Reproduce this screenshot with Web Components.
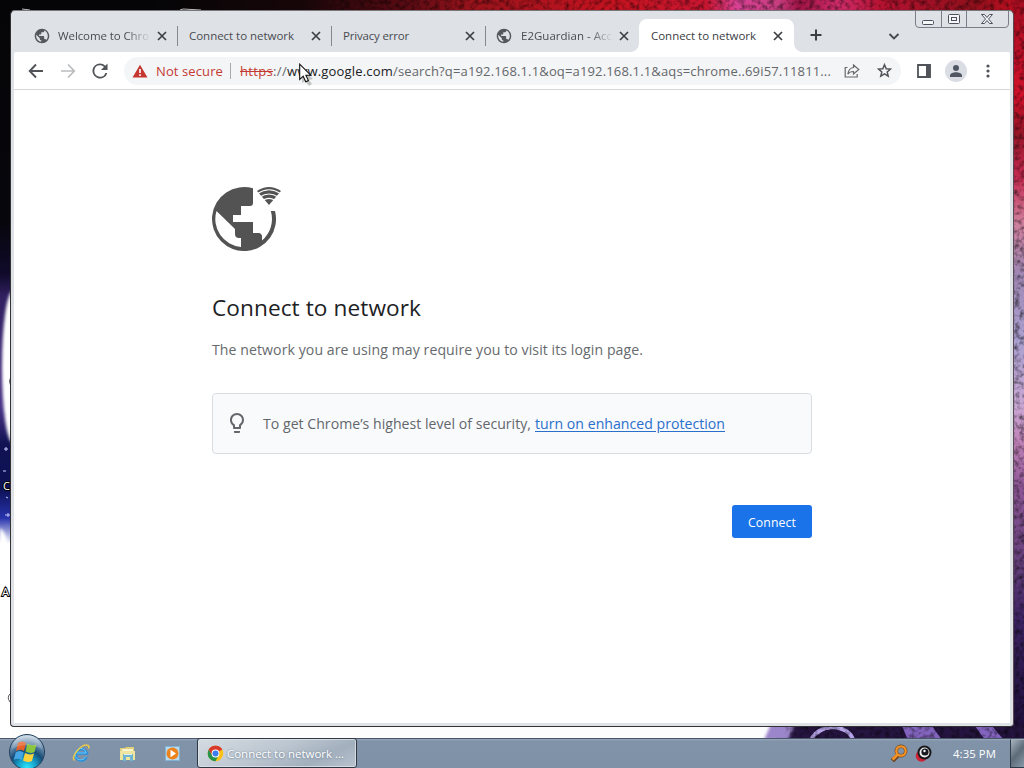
<!DOCTYPE html>
<html lang="en"><head><meta charset="utf-8"><title>Connect to network</title>
<style>html,body{margin:0;width:1024px;height:768px;overflow:hidden;font-family:"Open Sans","Noto Sans",sans-serif}</style></head>
<body><desk-top></desk-top>
<script>
const make=(name,html,setup)=>customElements.define(name,class extends HTMLElement{
  connectedCallback(){ if(this.shadowRoot)return;
    const r=this.attachShadow({mode:'open'}); r.innerHTML=typeof html==='function'?html(this):html; if(setup)setup(this,r);} });

const globe='<path d="M12 2C6.48 2 2 6.48 2 12s4.48 10 10 10 10-4.48 10-10S17.52 2 12 2zm-1 17.93c-3.95-.49-7-3.85-7-7.93 0-.62.08-1.21.21-1.79L9 15v1c0 1.1.9 2 2 2v1.93zm6.9-2.54c-.26-.81-1-1.39-1.9-1.39h-1v-3c0-.55-.45-1-1-1H8v-2h2c.55 0 1-.45 1-1V7h2c1.1 0 2-.9 2-2v-.41c2.93 1.19 5 4.06 5 7.41 0 2.08-.8 3.97-2.1 5.39z"/>';

make('desk-top',`<style>:host{display:flex;flex-direction:column;position:relative;width:1024px;height:768px;overflow:hidden;background:#fff}
desk-wallpaper{position:absolute;inset:0}
browser-window{position:relative;margin:10px 0 11px 10px;flex:none}
task-bar{position:relative;flex:1}
.cursor{position:absolute;left:298px;top:63px}</style>
<desk-wallpaper></desk-wallpaper><browser-window></browser-window><task-bar></task-bar>
<svg class="cursor" width="18" height="24" viewBox="0 0 18 24"><path d="M4 5l11 11-4 1 3 4-3 2-4-5-3 2z" fill="#0003"/><path d="M1.700 1.200v15.300l3.500-3.300 2.500 5.600 2.700-1.200-2.500-5.400h4.800z" fill="#fff" stroke="#111" stroke-width="1.100"/></svg>`);

make('desk-wallpaper',`<style>:host{display:block}svg{display:block}</style>
<svg width="1024" height="768"><defs>
<linearGradient id="t"><stop offset=".15" stop-color="#050507"/><stop offset=".3" stop-color="#180608"/><stop offset=".4" stop-color="#5e0b14"/><stop offset=".46" stop-color="#99131b"/><stop offset=".6" stop-color="#c51320"/><stop offset=".69" stop-color="#c81631"/><stop offset=".72" stop-color="#d94294"/><stop offset=".76" stop-color="#c83d80"/><stop offset=".78" stop-color="#a01446"/><stop offset=".82" stop-color="#d22c6a"/><stop offset=".86" stop-color="#b51230"/><stop offset=".95" stop-color="#90101c"/><stop offset="1" stop-color="#c80f20"/></linearGradient>
<linearGradient id="r" x2="0" y2="1"><stop offset="0" stop-color="#a80d20"/><stop offset=".13" stop-color="#d0102a"/><stop offset=".18" stop-color="#951527"/><stop offset=".24" stop-color="#c52a50"/><stop offset=".3" stop-color="#d07e9c"/><stop offset=".37" stop-color="#a087b4"/><stop offset=".46" stop-color="#aaa0d0"/><stop offset=".55" stop-color="#c9a6d3"/><stop offset=".6" stop-color="#bd7fb5"/><stop offset=".66" stop-color="#8c5595"/><stop offset=".76" stop-color="#66407c"/><stop offset=".84" stop-color="#3b2261"/><stop offset="1" stop-color="#1b0d36"/></linearGradient>
<linearGradient id="l" x2="0" y2="1"><stop offset="0" stop-color="#050507"/><stop offset=".3" stop-color="#07060c"/><stop offset=".37" stop-color="#100a2a"/><stop offset=".4" stop-color="#302060"/><stop offset=".55" stop-color="#4a3487"/><stop offset=".6" stop-color="#101252"/><stop offset=".66" stop-color="#0d1155"/><stop offset=".7" stop-color="#2733ac"/><stop offset=".735" stop-color="#fff"/></linearGradient>
<filter id="n" x="0" y="0" width="100%" height="100%"><feTurbulence type="fractalNoise" baseFrequency=".2" numOctaves="3" seed="4"/><feColorMatrix values="0 0 0 0 0  0 0 0 0 0  0 0 0 0 0  1.200 0 0 0 -.5"/><feComposite in2="SourceGraphic" operator="in"/></filter>
<filter id="b"><feGaussianBlur stdDeviation="1.600"/></filter><clipPath id="c"><path d="M0 0h12v768H0z"/></clipPath></defs>
<rect width="1024" height="768" fill="#fdfdfe"/><rect width="12" height="740" fill="url(#l)"/>
<g clip-path="url(#c)"><ellipse cx="13" cy="367" rx="11" ry="76" fill="#fff" filter="url(#b)"/><path d="M0 528Q9 535 8 556L14 570H0z" fill="#fff" filter="url(#b)"/></g>
<rect width="1024" height="11" fill="url(#t)"/><rect x="1011" width="13" height="740" fill="url(#r)"/>
<path d="M783 725H1024v15H775z" fill="#25143f"/><path d="M771 724h24l-7 16h-24z" fill="#9c86cb" filter="url(#b)"/>
<path d="M811 740Q817 728 833 727Q850 729 853 740" fill="none" stroke="#b5a4e8" stroke-width="4"/><path d="M902 726h30l10 14h-34zM975 726h17l12 14h-19z" fill="#8263bd"/>
<path d="M330 0H1024V740H785V726H1011V11H330z" filter="url(#n)"/>
<path d="M22 9l8 1M180 10l3-1 18 1" stroke="#bbb" fill="none"/>
<path d="M3 385l1 0M4 449h4M6 447v4M3 471h3M6 497l2 1M5 515h5M8 513v4" stroke="#c8c9ff"/>
<g font-family="Open Sans" font-size="11" fill="#fff" stroke="#000" stroke-width="2" paint-order="stroke"><text x="3" y="490">C</text><text x="2" y="596">A</text></g>
<path d="M11 376q-3 5 0 11M11 693q-5 4-1 9" stroke="#555" fill="none"/></svg>`);

make('browser-window',`<style>:host{display:flex;flex-direction:column;box-sizing:border-box;width:1004px;height:717px;border:1px solid #333;border-top-color:#77777c;border-right-color:#5a4a55;border-radius:5px 5px 4px 4px;background:#dee1e6;padding:0 3px 3px 3px}
connect-page{flex:1}</style><tab-strip></tab-strip><tool-bar></tool-bar><connect-page></connect-page>`);

make('tab-strip',`<style>:host{display:flex;position:relative;height:41px;padding-left:10px;align-items:flex-end;flex:none}
svg{display:block}.plus{margin:0 0 9px 14px}.chev{margin:0 0 9px 63px}window-controls{position:absolute;right:1px;top:-1px}</style>
<browser-tab icon w="91" label="Welcome to Chro"></browser-tab><browser-tab w="105" label="Connect to network"></browser-tab><browser-tab w="66" label="Privacy error"></browser-tab><browser-tab icon last w="91" label="E2Guardian - Acc"></browser-tab><browser-tab active w="105" label="Connect to network"></browser-tab>
<svg class="plus" width="16" height="16"><path d="M8 2.500v11M2.500 8h11" stroke="#3c4043" stroke-width="2"/></svg>
<svg class="chev" width="14" height="14"><path d="M2.500 5L7 9.500 11.500 5" fill="none" stroke="#45484c" stroke-width="1.900"/></svg>
<window-controls></window-controls>`);

make('browser-tab',h=>`<style>:host{display:flex;position:relative;box-sizing:border-box;width:154px;height:33px;align-items:center;padding:0 10px 0 11px;font-size:11.500px;color:#494c50}
:host([icon]){padding-left:10px}:host(:not([active]):not([last])){background:linear-gradient(#85888c,#85888c) 153px 7px/1px 20px no-repeat}
:host([active]){background:#fff;border-radius:8px 8px 0 0;color:#3c4043;width:155px;margin-left:-1px;padding-left:12px}
:host([active])::before,:host([active])::after{content:"";position:absolute;bottom:0;width:8px;height:8px;left:-8px;background:radial-gradient(circle at 0 0,#0000 7.500px,#fff 8px)}
:host([active])::after{left:auto;right:-8px;background:radial-gradient(circle at 100% 0,#0000 7.500px,#fff 8px)}
.g{margin-right:8px;flex:none;fill:#54575b}.t{flex:none}
:host([icon]) .t{-webkit-mask:linear-gradient(90deg,#000 68px,#0001 91px)}:host([last]) .g{margin-right:9px}.x{margin-left:auto;flex:none}</style>
${h.hasAttribute('icon')?`<svg class="g" width="16" height="16" viewBox="1 1 22 22">${globe}</svg>`:''}
<div class="t"><fit-text w="${h.getAttribute('w')}">${h.getAttribute('label')}</fit-text></div>
<svg class="x" width="12" height="12"><path d="M2 2l8 8M10 2l-8 8" stroke="#3c4043" stroke-width="1.700"/></svg>`);

make('window-controls',`<style>:host{display:block}svg{display:block}</style><svg width="94" height="19"><path d="M.5 0v14q0 3.500 3.500 3.500h86q3.500 0 3.500-3.500V0M26.500 0v17.500M51.500 0v17.500" fill="none" stroke="#797e88"/>
<g fill="#f5f6f8" stroke="#4d505c"><rect x="7.500" y="10.500" width="11" height="4" rx="1"/><rect x="33.500" y="4.500" width="11" height="9" rx="1"/><rect x="36.500" y="7.500" width="5" height="3"/><path d="M66.500 4.500h3l2.500 3 2.500-3h3l-4 4.500 4 4.500h-3l-2.500-3-2.500 3h-3l4-4.500z"/></g></svg>`);

make('tool-bar',`<style>:host{display:flex;box-sizing:border-box;height:38px;flex:none;align-items:center;padding-left:6px;background:#fff;border-bottom:1px solid #d5d6d8;border-radius:2px 2px 0 0}
.b{width:32px;height:32px;flex:none;display:grid;place-items:center}omni-box{margin:0 7px 0 8px;flex:none}.av{width:22px;height:22px;border-radius:50%;background:#dadde4;display:grid;place-items:center}
svg{display:block}</style>
<span class="b"><svg width="16" height="16" fill="none" stroke="#505357" stroke-width="1.900"><path d="M15 8H2M8 1.500L1.700 8 8 14.500"/></svg></span>
<span class="b"><svg width="16" height="16" fill="none" stroke="#bbbcbe" stroke-width="1.700"><path d="M1 8h13M8 1.500L14.300 8 8 14.500"/></svg></span>
<span class="b"><svg width="16" height="16" viewBox="3.500 3.500 17 17" fill="#505357"><path d="M17.650 6.350A7.958 7.958 0 0 0 12 4a8 8 0 1 0 7.730 10h-2.080A6 6 0 1 1 12 6c1.660 0 3.140.69 4.220 1.780L13 11h7V4z"/></svg></span>
<omni-box></omni-box>
<span class="b"><svg width="14" height="14"><path d="M1 1h12v12H1z" fill="none" stroke="#505357" stroke-width="1.800"/><path d="M9 1h4.500v12H9z" fill="#505357"/></svg></span>
<span class="b"><span class="av"><svg width="14" height="14" fill="#505762"><circle cx="7" cy="4" r="3"/><path d="M1 13v-1.600C1 9.300 4.500 8.200 7 8.200s6 1.100 6 3.200V13z"/></svg></span></span>
<span class="b"><svg width="4" height="14" fill="#505357"><circle cx="2" cy="2" r="1.600"/><circle cx="2" cy="7" r="1.600"/><circle cx="2" cy="12" r="1.600"/></svg></span>`);

make('omni-box',`<style>:host{display:flex;align-items:center;box-sizing:border-box;width:777px;height:28px;border-radius:14px;background:#f4f5f6;padding:0 9px 0 8px;font-size:13px;color:#64676b;white-space:nowrap}
.ns{color:#c43a33;margin-left:8px}.sep{width:1px;height:16px;background:#a8aaad;margin:0 9px 0 7px}.h{color:#c43a33;text-decoration:line-through}.d{color:#202124}svg{display:block;flex:none}.s{margin-left:13px}.st{margin-left:17px}</style>
<svg width="16" height="14"><path d="M8 .8L15.500 13.500H.5z" fill="#c5362f"/><path d="M8 5v4M8 10.300v1.700" stroke="#fff" stroke-width="1.600"/></svg>
<fit-text class="ns" w="67">Not secure</fit-text><span class="sep"></span>
<fit-text class="h" w="33">https</fit-text><fit-text w="14">://</fit-text><fit-text class="d" w="106">www.google.com</fit-text><fit-text w="438">/search?q=a192.168.1.1&amp;oq=a192.168.1.1&amp;aqs=chrome..69i57.11811...</fit-text>
<svg class="s" width="16" height="14" fill="none" stroke="#66696d" stroke-width="1.200"><path d="M3.500 3.500H1.200v9.500h12V10M9.500 1L14.800 5.500 9.500 10V7.500C6.500 7.500 5 8.500 3.800 10.200 4.300 6.500 6.300 3.900 9.500 3.500z"/></svg>
<svg class="st" width="15" height="15" viewBox="0 0 15 15" fill="none" stroke="#505357" stroke-width="1.500"><path d="M7.500 1.700l1.700 4 4.300.4-3.300 2.800 1 4.200-3.700-2.200-3.700 2.200 1-4.200L1.500 6.100l4.300-.4z"/></svg>`);

make('connect-page',`<style>:host{display:block;background:#fff}main{width:600px;margin-left:198px;padding-top:97px}svg{display:block}
h1{font-size:22.600px;line-height:30px;font-weight:400;margin:42px 0 0;color:#202124}p{font-size:14.100px;line-height:22px;margin:16px 0 0;color:#666a6d}</style>
<main><svg width="70" height="64" viewBox="212 187 70 64"><path d="M253 188.300A32 32 0 1 0 275 211h-4.200A28 28 0 0 1 262 240.500V237q0-4-4-4h-5V222H233V215h8V206h9q3 0 3-3zM216.500 211L235 229v5q0 4 4 4h2v9A28 28 0 0 1 216.500 211z" fill="#535353" fill-rule="evenodd"/>
<path d="M253 233h4q5 0 5 5v5l-9 4z" fill="#535353"/>
<path d="M257 191Q269 183 281 191L269 205z" fill="#535353"/><g fill="none" stroke="#fff" stroke-width="1.100"><path d="M257.500 193.500Q269 186 280.500 193.500M260 197Q269 191 278 197M263 200.300Q269 196.500 275 200.300"/></g></svg>
<h1><fit-text w="209">Connect to network</fit-text></h1><p><fit-text w="431">The network you are using may require you to visit its login page.</fit-text></p>
<security-tip></security-tip><action-button></action-button></main>`);

make('security-tip',`<style>:host{display:flex;box-sizing:border-box;width:600px;height:61px;margin-top:32px;border:1px solid #dadce0;border-radius:4px;background:#f8fafc;align-items:center;padding-left:17px;font-size:14.100px;color:#63676b;white-space:nowrap}
a{color:#2a6fcb;text-decoration:underline;text-underline-offset:2px;margin-left:4px}svg{display:block;margin-right:19px;margin-bottom:1px}</style>
<svg width="14" height="20" viewBox="5 2 14 20" fill="#63676b"><path d="M9 21c0 .5.400 1 1 1h4c.600 0 1-.5 1-1v-1H9zm3-19C8.100 2 5 5.100 5 9c0 2.400 1.200 4.500 3 5.700V17c0 .5.400 1 1 1h6c.600 0 1-.5 1-1v-2.300c1.800-1.300 3-3.400 3-5.700 0-3.900-3.100-7-7-7m2.850 11.100-.85.600V16h-4v-2.300l-.85-.6A5 5 0 1 1 17 9a5 5 0 0 1-2.150 4.100"/></svg>
<fit-text w="268">To get Chrome’s highest level of security,</fit-text><a><fit-text w="190">turn on enhanced protection</fit-text></a>`);

make('action-button',`<style>:host{display:flex;box-sizing:border-box;width:80px;height:33px;padding-top:2px;margin:51px 0 0 520px;border-radius:3px;background:#1a73e8;color:#fff;font-size:12.300px;align-items:center;justify-content:center}</style><fit-text w="48">Connect</fit-text>`);

make('task-bar',`<style>:host{display:flex;align-items:flex-start;box-sizing:border-box;width:1024px;border-top:1px solid #4b5668;background:linear-gradient(#99aabd,#8093a9 2px,#7f91a7);padding-left:8px}
svg{display:block;flex:none}.orb{margin-top:-6px}.ie{margin:5px 0 0 26px}.fo{margin:6px 0 0 29px}.mp{margin:7px 0 0 29px}
.app{display:flex;align-items:center;box-sizing:border-box;width:160px;height:30px;margin:-1px 0 0 17px;border:1px solid #303744;border-radius:3px;background:linear-gradient(155deg,#d5dbe2,#bdc7d1 45%,#a2afbd 75%,#b8c3ce);box-shadow:inset 0 0 0 1px #dee4eacc;padding-left:9px;font-size:11.500px;color:#fff;text-shadow:0 0 2px #78899b,0 1px 2px #8d9aab}
.app fit-text{margin-left:3px}.tr{display:flex;margin-left:auto;height:28px;align-items:center;color:#fff;font-size:11.300px}.tr fit-text{margin:0 14px 0 21px}.p2{margin-left:7px}
.show{width:14px;height:29px;box-sizing:border-box;border:1px solid #303b4a;border-right:0;border-top-color:#a0acba;background:linear-gradient(130deg,#a7b3bf,#5e6b79 50%,#8999a9)}</style>
<svg class="orb" width="38" height="38"><defs><radialGradient id="o" cx=".5" cy=".95" r=".9"><stop stop-color="#30e8ff"/><stop offset=".3" stop-color="#159ec8"/><stop offset=".55" stop-color="#164d78"/><stop offset=".8" stop-color="#6f8fae"/><stop offset="1" stop-color="#c0d2df"/></radialGradient></defs><circle cx="19" cy="19" r="17.500" fill="url(#o)" stroke="#213e5b"/>
<path d="M10 10q4-3 8 0l-2 8q-4-3-8 0z" fill="#e5622a"/><path d="M19.500 10.500q4 3 9 1l-2 7.500q-4 2-9-.500z" fill="#8cc63f"/><path d="M7.700 19.500q4-3 8 0l-2 7.500q-4-2.500-8 0z" fill="#45a5e5"/><path d="M17 20q4 2.500 9 .5l-2 7.500q-4.500 2-9-.5z" fill="#fcd13c"/><path d="M4 16Q6 3 19 2.500 31 3 34 16 20 8 4 16z" fill="#fff3"/></svg>
<svg class="ie" width="18" height="18" fill="none"><path d="M14.500 13A5.700 5.700 0 1 1 14.800 9.300H5" stroke="#278edc" stroke-width="2.800"/><path d="M13.800 12.600A5.700 5.700 0 1 1 14.200 9H5" stroke="#73caf5" stroke-width="1"/><path d="M2.500 16.500C-2 13 10-1 16 1.500q1.500.8.500 3" stroke="#e9cb48" stroke-width="1.500"/></svg>
<svg class="fo" width="17" height="17"><path d="M1 3h5l1-1h8v13H1z" fill="#e0cf79"/><path d="M3 4h11v3H3z" fill="#f8f4d1"/><path d="M1 6h15v9H1z" fill="#eee59e"/><path d="M4 9h10v7h-3v-4H7v4H4z" fill="#70b5d3"/><path d="M5 9h8v1H5z" fill="#d6f0f6"/></svg>
<svg class="mp" width="15" height="15"><path d="M.5.5h14v14H.5z" fill="#b8dbef" stroke="#81b4d4"/><circle cx="7.500" cy="7.500" r="6" fill="#ed831d"/><path d="M5.500 3.800v7.400L11 7.500z" fill="#fff"/></svg>
<div class="app"><svg width="17" height="17" viewBox="0 0 48 48"><circle cx="24" cy="24" r="22" fill="#fbc116"/><path d="M24 24L4.950 13A22 22 0 0 1 43.050 13z" fill="#d93a2b"/><path d="M4.950 13A22 22 0 0 0 24 46L33 29 24 34 15 29z" fill="#26934a"/><path d="M24 13h19.050A22 22 0 0 0 4.950 13L14.500 29.500z" fill="#d93a2b"/><circle cx="24" cy="24" r="11" fill="#fff"/><circle cx="24" cy="24" r="8.500" fill="#3b7ded"/></svg><fit-text w="117">Connect to network ...</fit-text></div>
<div class="tr"><svg width="18" height="18" fill="none"><circle cx="11" cy="7" r="4.700" stroke="#6d4526" stroke-width="3.400"/><path d="M8 10l-6 5 2 2 6-6" stroke="#6d4526" stroke-width="2"/><circle cx="11" cy="7" r="4.700" stroke="#f39224" stroke-width="2.300"/><path d="M7.500 10.500L2.500 15.500" stroke="#f39224" stroke-width="2.800"/></svg>
<svg class="p2" width="17" height="17"><circle cx="6.500" cy="11" r="5.800" fill="#cd2537"/><circle cx="9.500" cy="7.500" r="6" fill="#eee" stroke="#17171b" stroke-width="2"/><circle cx="10" cy="7" r="3.600" fill="#191a20"/><circle cx="9.500" cy="6" r="1.200" fill="#fff"/></svg>
<fit-text w="43">4:35 PM</fit-text><span class="show"></span></div>`);

/* Tracks its text so that the line fills the width given in "w". */
make('fit-text','<style>:host{display:inline-block;white-space:nowrap;flex:none;text-decoration:inherit}span{display:inline-block;text-decoration:inherit}</style><span><slot></slot></span>',(h,r)=>{
  const s=r.querySelector('span'),w=+h.getAttribute('w'),n=h.textContent.length;
  s.style.letterSpacing=((w-s.getBoundingClientRect().width)/n)+'px'; h.style.width=w+'px';
});
</script></body></html>
